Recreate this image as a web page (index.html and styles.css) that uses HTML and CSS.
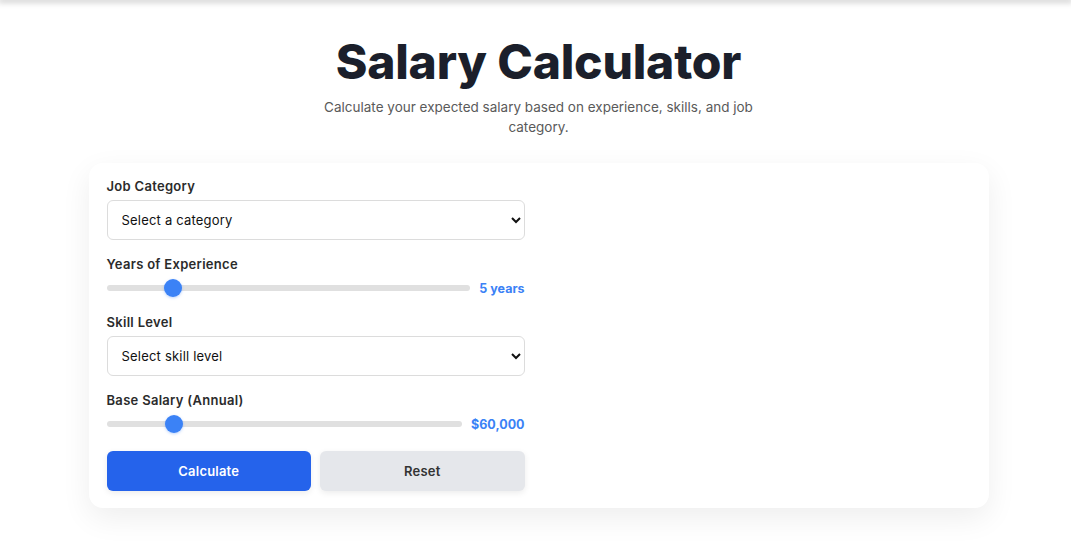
FILE: index.html
```html
<!DOCTYPE html>
<html lang="en">
<head>
<meta charset="utf-8">
<title>Salary Calculator</title>
<link rel="stylesheet" href="styles.css">
</head>
<body>
<div class="topbar"></div>
<main class="page">
  <header class="hero">
    <h1 class="title">Salary Calculator</h1>
    <p class="subtitle">Calculate your expected salary based on experience, skills, and job category.</p>
  </header>
  <section class="card">
    <form class="form">
      <div class="group">
        <label class="label" for="cat">Job Category</label>
        <select id="cat" class="select">
          <option>Select a category</option>
        </select>
      </div>
      <div class="group">
        <label class="label" for="exp">Years of Experience</label>
        <div class="range-row">
          <input id="exp" class="range" type="range" min="0" max="30" value="5">
          <span class="range-value">5 years</span>
        </div>
      </div>
      <div class="group">
        <label class="label" for="skill">Skill Level</label>
        <select id="skill" class="select">
          <option>Select skill level</option>
        </select>
      </div>
      <div class="group">
        <label class="label" for="base">Base Salary (Annual)</label>
        <div class="range-row">
          <input id="base" class="range" type="range" min="20000" max="250000" value="60000">
          <span class="range-value">$60,000</span>
        </div>
      </div>
      <div class="actions">
        <button type="button" class="btn btn-primary">Calculate</button>
        <button type="button" class="btn btn-secondary">Reset</button>
      </div>
    </form>
    <div class="results"></div>
  </section>
</main>
</body>
</html>
```
FILE: styles.css
```css
* { box-sizing: border-box; }
html, body { margin: 0; padding: 0; background: #ffffff; }
body {
  font-family: "Inter", "Noto Sans", sans-serif;
  color: #333;
  padding-left: 6px;
  min-height: 559px;
}
.topbar {
  height: 0;
  margin-left: -6px;
  box-shadow: 0 0 6px 2px rgba(0, 0, 0, 0.25);
}
.page {
  width: 900px;
  margin: 0 auto;
  padding-top: 32px;
  padding-bottom: 40px;
}
.hero { text-align: center; }
.title {
  margin: 0;
  font-size: 48px;
  line-height: 60px;
  font-weight: 800;
  color: #1b1f2b;
  letter-spacing: -0.2px;
}
.subtitle {
  margin: 5px auto 0;
  max-width: 440px;
  font-size: 13.5px;
  line-height: 20px;
  color: #5a5a5a;
}
.card {
  margin-top: 26px;
  background: #fff;
  border-radius: 14px;
  box-shadow: 0 10px 30px rgba(0, 0, 0, 0.07);
  padding: 13px 18px 17px;
  display: grid;
  grid-template-columns: 418px 1fr;
  gap: 28px;
}
.form { display: flex; flex-direction: column; }
.group { display: flex; flex-direction: column; gap: 4px; margin-bottom: 14px; }
.label {
  font-size: 13px;
  line-height: 20px;
  font-weight: 600;
  letter-spacing: 0.3px;
  color: #2b2b2b;
}
.select {
  height: 40px;
  width: 100%;
  padding: 0 10px;
  border: 1px solid #dcdcdc;
  border-radius: 6px;
  background: #fff;
  font-family: inherit;
  font-size: 13px;
  letter-spacing: 0.2px;
  color: #111;
}
.range-row {
  display: flex;
  align-items: center;
  gap: 9px;
  height: 20px;
}
.range {
  flex: 1;
  margin: 0;
  -webkit-appearance: none;
  appearance: none;
  height: 6px;
  border-radius: 3px;
  background: #e0e0e0;
  outline: none;
}
.range::-webkit-slider-thumb {
  -webkit-appearance: none;
  appearance: none;
  width: 18px;
  height: 18px;
  border-radius: 50%;
  background: #3b82f6;
  border: none;
  box-shadow: 0 1px 3px rgba(59, 130, 246, 0.35);
}
.range-value {
  font-size: 12.5px;
  font-weight: 700;
  color: #3b82f6;
  white-space: nowrap;
}
.actions {
  margin-top: 3px;
  display: grid;
  grid-template-columns: 1fr 1fr;
  gap: 9px;
}
.btn {
  height: 40px;
  border: none;
  border-radius: 6px;
  font-family: inherit;
  font-size: 13px;
  font-weight: 600;
  letter-spacing: 0.2px;
  box-shadow: 0 2px 6px rgba(0, 0, 0, 0.08);
}
.btn-primary { background: #2563eb; color: #fff; }
.btn-secondary { background: #e5e7eb; color: #333; }
```
